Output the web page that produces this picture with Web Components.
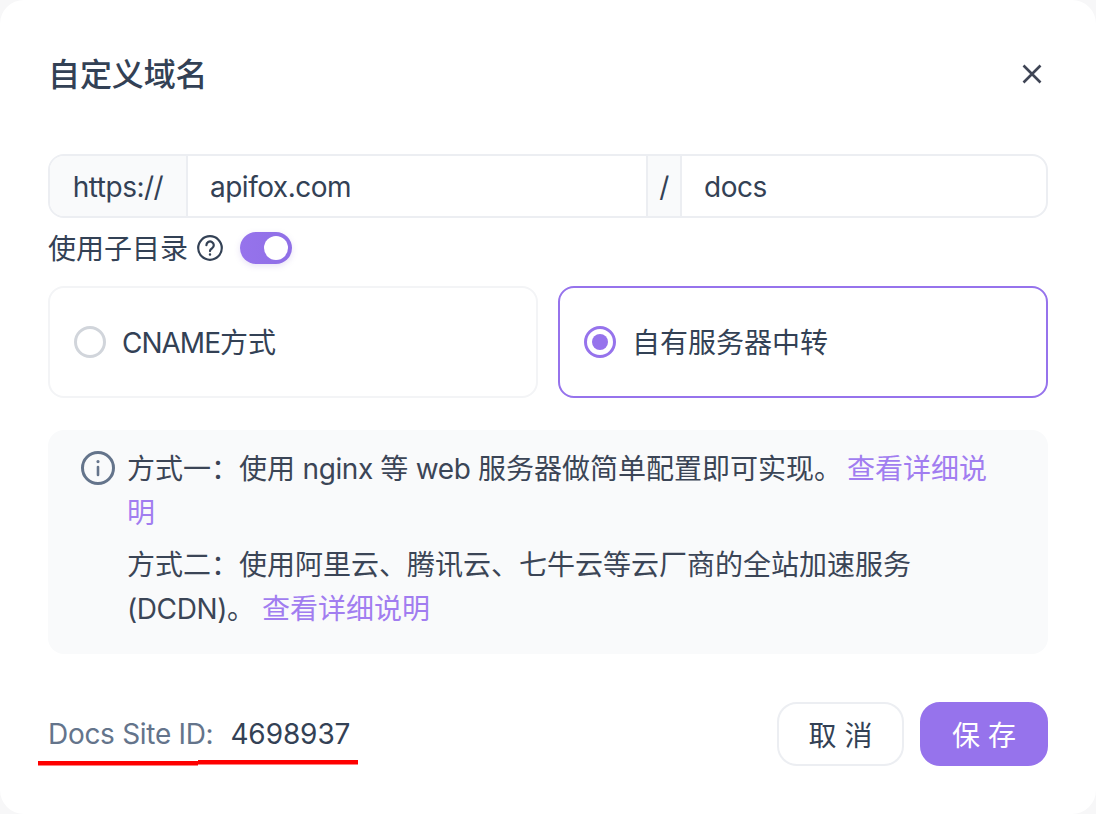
<!DOCTYPE html>
<html lang="zh">
<head>
<meta charset="utf-8">
<title>自定义域名</title>
<style>
  html, body { margin: 0; height: 100%; background: #f7f7f8; }
  body { font-family: Inter, "Noto Sans CJK SC", sans-serif; color: #334155; }
</style>
</head>
<body>
<domain-dialog heading="自定义域名">
  <url-field></url-field>
  <sub-toggle label="使用子目录"></sub-toggle>
  <div slot="cards">
    <choice-card label="方式" prefix="CNAME"></choice-card>
    <choice-card label="自有服务器中转" selected></choice-card>
  </div>
  <info-note slot="note"></info-note>
  <site-id slot="id" value="4698937"></site-id>
  <app-button slot="actions">取 消</app-button>
  <app-button slot="actions" primary>保 存</app-button>
</domain-dialog>

<script>
class DomainDialog extends HTMLElement {
  constructor() {
    super();
    this.attachShadow({ mode: 'open' });
  }

  connectedCallback() {
    const heading = this.getAttribute('heading') || '';
    this.shadowRoot.innerHTML = `
      <style>
        :host {
          display: flex;
          flex-direction: column;
          box-sizing: border-box;
          width: 1096px;
          height: 814px;
          padding: 0 48px 48px;
          background: #fff;
          border-radius: 24px;
        }
        header {
          display: flex;
          align-items: center;
          justify-content: space-between;
          height: 148px;
          box-sizing: border-box;
          margin-bottom: 6px;
        }
        h2 {
          margin: 2px 0 0 0;
          font-size: 32px;
          line-height: 44px;
          font-weight: 500;
          letter-spacing: -.1px;
          color: #334155;
        }
        .close { width: 28px; height: 28px; display: block; margin-right: 2px; }
        ::slotted([slot="cards"]) {
          display: grid;
          grid-template-columns: 1fr 1fr;
          gap: 20px;
          margin-top: 22px;
        }
        ::slotted([slot="note"]) { margin-top: 32px; }
        footer {
          display: flex;
          align-items: center;
          gap: 16px;
          margin-top: 48px;
        }
        .id { flex: 1; }
      </style>
      <header>
        <h2>${heading}</h2>
        <svg class="close" viewBox="0 0 28 28" fill="none" stroke="#3f4555" stroke-width="2.6">
          <path d="M5.5 5.5 L22.5 22.5 M22.5 5.5 L5.5 22.5"/>
        </svg>
      </header>
      <slot></slot>
      <slot name="cards"></slot>
      <slot name="note"></slot>
      <footer>
        <div class="id"><slot name="id"></slot></div>
        <slot name="actions"></slot>
      </footer>
    `;
  }
}

class UrlField extends HTMLElement {
  constructor() {
    super();
    this.attachShadow({ mode: 'open' });
  }

  connectedCallback() {
    this.shadowRoot.innerHTML = `
      <style>
        :host {
          display: flex;
          box-sizing: border-box;
          height: 64px;
          border: 2px solid #eceef2;
          border-radius: 16px;
          overflow: hidden;
          font-size: 28px;
          line-height: 62px;
          letter-spacing: -.5px;
          color: #334155;
        }
        .addon { background: #f9fafb; flex: none; text-align: center; }
        .scheme { width: 136px; border-right: 2px solid #eceef2; }
        .slash { width: 32px; border-left: 2px solid #eceef2; border-right: 2px solid #eceef2; }
        .input { padding-left: 22px; box-sizing: border-box; }
        .host { width: 458px; }
        .path { flex: 1; }
      </style>
      <div class="addon scheme">https://</div>
      <div class="input host">apifox.com</div>
      <div class="addon slash">/</div>
      <div class="input path">docs</div>
    `;
  }
}

class SubToggle extends HTMLElement {
  constructor() {
    super();
    this.attachShadow({ mode: 'open' });
  }

  connectedCallback() {
    const label = this.getAttribute('label') || '';
    this.shadowRoot.innerHTML = `
      <style>
        :host {
          display: flex;
          align-items: center;
          height: 32px;
          margin-top: 14px;
          font-size: 28px;
          line-height: 32px;
          color: #334155;
        }
        span { position: relative; top: 1px; }
        svg { width: 26px; height: 26px; margin-left: 9px; flex: none; }
        .track {
          position: relative;
          width: 52px;
          height: 32px;
          margin-left: 17px;
          border-radius: 16px;
          background: linear-gradient(90deg, #9673ec, #8f6fe6);
          box-shadow: 0 2px 6px rgba(120, 90, 200, .18);
        }
        .knob {
          position: absolute;
          top: 4px;
          right: 4px;
          width: 24px;
          height: 24px;
          border-radius: 50%;
          background: #fff;
        }
      </style>
      <span>${label}</span>
      <svg viewBox="0 0 26 26" fill="none" stroke="#334155" stroke-width="2.2" stroke-linecap="round">
        <circle cx="13" cy="13" r="11.8"/>
        <path d="M9.4 10.2 a3.7 3.7 0 1 1 5.7 3.1 c-1.4.8-2.1 1.4-2.1 2.8"/>
        <circle cx="13" cy="19.4" r=".6" fill="#334155" stroke-width="1.3"/>
      </svg>
      <div class="track"><div class="knob"></div></div>
    `;
  }
}

class ChoiceCard extends HTMLElement {
  constructor() {
    super();
    this.attachShadow({ mode: 'open' });
  }

  connectedCallback() {
    const label = this.getAttribute('label') || '';
    const prefix = this.getAttribute('prefix') || '';
    this.shadowRoot.innerHTML = `
      <style>
        :host {
          display: flex;
          align-items: center;
          gap: 16px;
          box-sizing: border-box;
          height: 112px;
          padding: 0 24px;
          border: 2px solid #f3f4f6;
          border-radius: 16px;
          font-size: 28px;
          color: #334155;
        }
        :host([selected]) { border-color: #9673ec; }
        .radio {
          box-sizing: border-box;
          flex: none;
          width: 32px;
          height: 32px;
          border-radius: 50%;
          border: 3px solid #d1d5db;
          display: flex;
          align-items: center;
          justify-content: center;
        }
        :host([selected]) .radio { border-color: #9673ec; }
        :host([selected]) .radio::after {
          content: "";
          width: 16px;
          height: 16px;
          border-radius: 50%;
          background: #9673ec;
        }
        .text { margin-bottom: 2px; }
        .prefix { letter-spacing: -1px; }
      </style>
      <span class="radio"></span>
      <span class="text"><span class="prefix">${prefix}</span>${label}</span>
    `;
  }
}

class InfoNote extends HTMLElement {
  constructor() {
    super();
    this.attachShadow({ mode: 'open' });
  }

  connectedCallback() {
    this.shadowRoot.innerHTML = `
      <style>
        :host {
          display: flex;
          gap: 11px;
          box-sizing: border-box;
          height: 224px;
          padding: 17px 56px 0 32px;
          background: #f9fafb;
          border-radius: 16px;
          font-size: 28px;
          line-height: 44px;
          color: #3b4556;
        }
        svg { flex: none; width: 36px; height: 36px; margin-top: 3px; }
        p { margin: 0 0 8px; }
        a { color: #a17df0; text-decoration: none; }
        .en { letter-spacing: -.4px; }
        .one a { margin-left: 5px; }
        .two a { margin-left: 7px; }
      </style>
      <svg viewBox="0 0 36 36" fill="none" stroke="#64748b" stroke-width="3" stroke-linecap="round">
        <circle cx="18" cy="18" r="15.5"/>
        <path d="M18 17 V25" stroke-width="2.6"/>
        <circle cx="18" cy="11.6" r=".7" fill="#64748b" stroke-width="1.8"/>
      </svg>
      <div>
        <p class="one">方式一：使用<span class="en"> nginx </span>等<span class="en"> web </span>服务器做简单配置即可实现。<a>查看详细说明</a></p>
        <p class="two">方式二：使用阿里云、腾讯云、七牛云等云厂商的全站加速服务 <span class="en">(DCDN)</span>。<a>查看详细说明</a></p>
      </div>
    `;
  }
}

class SiteId extends HTMLElement {
  constructor() {
    super();
    this.attachShadow({ mode: 'open' });
  }

  connectedCallback() {
    const value = this.getAttribute('value') || '';
    this.shadowRoot.innerHTML = `
      <style>
        :host {
          display: inline-flex;
          position: relative;
          gap: 17px;
          font-size: 28px;
          line-height: 40px;
          color: #334155;
        }
        .key { color: #64748b; letter-spacing: -.3px; }
        .val { letter-spacing: -.1px; }
        /* red marks drawn on top of the screenshot */
        svg { position: absolute; left: -10px; top: 44px; width: 320px; height: 8px; }
      </style>
      <span class="key">Docs Site ID:</span>
      <span class="val">${value}</span>
      <svg viewBox="0 0 320 8" fill="#fe0000">
        <rect x="0" y="3" width="160" height="4.5"/>
        <rect x="160" y="2" width="160" height="4.5"/>
      </svg>
    `;
  }
}

class AppButton extends HTMLElement {
  constructor() {
    super();
    this.attachShadow({ mode: 'open' });
  }

  connectedCallback() {
    this.shadowRoot.innerHTML = `
      <style>
        :host {
          display: flex;
          align-items: center;
          justify-content: center;
          box-sizing: border-box;
          height: 64px;
          width: 127px;
          border: 2px solid #eceef2;
          border-radius: 20px;
          background: #fff;
          font-size: 28px;
          color: #334155;
        }
        :host([primary]) {
          width: 128px;
          border-color: #9673ec;
          background: #9673ec;
          color: #fff;
        }
      </style>
      <slot></slot>
    `;
  }
}

customElements.define('domain-dialog', DomainDialog);
customElements.define('url-field', UrlField);
customElements.define('sub-toggle', SubToggle);
customElements.define('choice-card', ChoiceCard);
customElements.define('info-note', InfoNote);
customElements.define('site-id', SiteId);
customElements.define('app-button', AppButton);
</script>
</body>
</html>
